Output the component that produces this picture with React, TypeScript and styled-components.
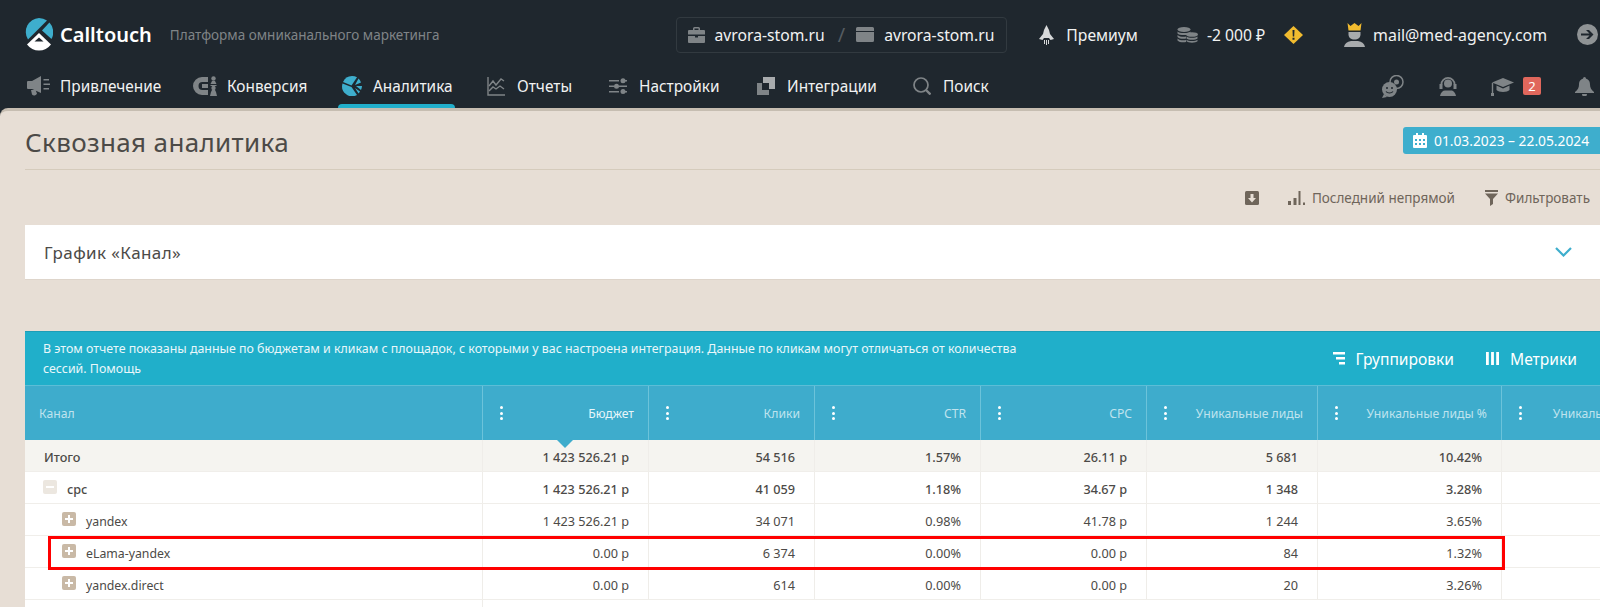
import styled, {createGlobalStyle} from "styled-components";
import {ReactNode} from "react";

const GlobalStyle = createGlobalStyle`
  html, body {
    margin: 0;
    padding: 0;
    height: 607px;
    overflow: hidden;
    background: #e7ded5;
    font-family: "Noto Sans", "Open Sans", sans-serif;
  }
`;

const COLUMNS = "458px 166px 166px 166px 166px 171px 184px 173px";

type RowData = {
    name: string,
    level: 0 | 1 | 2,
    toggle?: "plus" | "minus",
    strong?: boolean,
    total?: boolean,
    values: string[],
}

const HEADERS = ["Бюджет", "Клики", "CTR", "CPC", "Уникальные лиды", "Уникальные лиды %", "Уникальные лиды"];

const ROWS: RowData[] = [
    {name: "Итого", level: 0, strong: true, total: true, values: ["1 423 526.21 р", "54 516", "1.57%", "26.11 р", "5 681", "10.42%", ""]},
    {name: "cpc", level: 1, toggle: "minus", strong: true, values: ["1 423 526.21 р", "41 059", "1.18%", "34.67 р", "1 348", "3.28%", ""]},
    {name: "yandex", level: 2, toggle: "plus", values: ["1 423 526.21 р", "34 071", "0.98%", "41.78 р", "1 244", "3.65%", ""]},
    {name: "eLama-yandex", level: 2, toggle: "plus", values: ["0.00 р", "6 374", "0.00%", "0.00 р", "84", "1.32%", ""]},
    {name: "yandex.direct", level: 2, toggle: "plus", values: ["0.00 р", "614", "0.00%", "0.00 р", "20", "3.26%", ""]},
];

function LogoMark() {
    return (
        <svg width="28" height="33" viewBox="0 0 28 33">
            <path d="M14 0a14 14 0 0 1 8 2.600L3 21.500A14 14 0 0 1 14 0z" fill="#3eaecd"/>
            <path d="M24.400 4.600A14 14 0 0 1 26.500 21L17 12.500z" fill="#3eaecd"/>
            <path d="M14 15l12 11.500a15 15 0 0 1-24 0z" fill="#fff"/>
            <path d="M14 19.500l4.500 4h-9z" fill="#1f272e"/>
        </svg>
    );
}

function Icon({w, h, children}: {w: number, h: number, children: ReactNode}) {
    return <svg width={w} height={h} viewBox={`0 0 ${w} ${h}`} fill="#7f8487">{children}</svg>;
}

function App() {
    return (
        <Page>
            <GlobalStyle/>
            <Header>
                <TopRow>
                    <Brand>
                        <LogoMark/>
                        <BrandName>Calltouch</BrandName>
                    </Brand>
                    <Slogan>Платформа омниканального маркетинга</Slogan>
                    <ProjectBox>
                        <Icon w={17} h={16}>
                            <path d="M5 3V1.500A1.500 1.500 0 0 1 6.500 0h4A1.500 1.500 0 0 1 12 1.500V3h4a1 1 0 0 1 1 1v3.500H0V4a1 1 0 0 1 1-1zM6.500 1.500V3h4V1.500zM0 9h7v1.500h3V9h7v6a1 1 0 0 1-1 1H1a1 1 0 0 1-1-1z"/>
                        </Icon>
                        <TopText>avrora-stom.ru</TopText>
                        <Slash>/</Slash>
                        <Icon w={18} h={15}>
                            <path d="M1.500 0h15A1.500 1.500 0 0 1 18 1.500V4H0V1.500A1.500 1.500 0 0 1 1.500 0zM0 5h18v8.500a1.500 1.500 0 0 1-1.500 1.500h-15A1.500 1.500 0 0 1 0 13.500z"/>
                        </Icon>
                        <TopText>avrora-stom.ru</TopText>
                    </ProjectBox>
                    <TopItem $left={32} $gap={12}>
                        <svg width="15" height="20" viewBox="0 0 15 20" fill="#d7d9da">
                            <path d="M7.500 0l2.500 5 1 4 4 5-3.500 1L10 13H5l-1.500 2L0 14l4-5 1-4z"/>
                            <path d="M5 15h1v4H5zM7 15h1v5H7zM9 15h1v4H9z"/>
                        </svg>
                        <TopText>Премиум</TopText>
                    </TopItem>
                    <TopItem $left={39} $gap={9}>
                        <Icon w={21} h={16}>
                            <ellipse cx="7" cy="2.500" rx="6.500" ry="2.500"/>
                            <path d="M.5 4.500C2 6.500 12 6.500 13.500 4.500V6.500C12 8.500 2 8.500.5 6.500zM.5 8C2 10 8 10 9 9.500V11.500C7 12 2 12 .5 10zM.5 11.500C2 13.500 7 13.500 9 13V15C7 15.500 2 15.500.5 13.500z"/>
                            <ellipse cx="15" cy="7.500" rx="6" ry="2.300"/>
                            <path d="M9.500 9.500c1.500 1.700 9.500 1.700 11 0v2c-1.500 1.700-9.500 1.700-11 0zM9.500 12.800c1.500 1.700 9.500 1.700 11 0v1.500c-1.500 1.900-9.500 1.900-11 0z"/>
                        </Icon>
                        <TopText>-2 000 ₽</TopText>
                    </TopItem>
                    <Warning>
                        <svg width="19" height="18" viewBox="0 0 19 18">
                            <path d="M9.500 0L19 9l-9.500 9L0 9z" fill="#f1bb2f"/>
                            <path d="M8.500 4h2l-.3 6.500H8.800zM8.500 11.800h2v2h-2z" fill="#1f272e"/>
                        </svg>
                    </Warning>
                    <TopItem $left={41} $gap={8}>
                        <svg width="21" height="24" viewBox="0 0 21 24">
                            <path d="M3.500 0l3 3L10.500 0l4 3 3-3-1 7.500h-12z" fill="#f1bb2f"/>
                            <path d="M4.500 9h12v2.500c0 3-2.500 5-6 5s-6-2-6-5z" fill="#a8abad"/>
                            <path d="M0 24c.5-3.500 3-5.500 7-6h7c4 .5 6.500 2.500 7 6z" fill="#a8abad"/>
                        </svg>
                        <MailText>mail@med-agency.com</MailText>
                    </TopItem>
                    <Logout>
                        <svg width="21" height="21" viewBox="0 0 21 21">
                            <circle cx="10.500" cy="10.500" r="10.500" fill="#8f9395"/>
                            <path d="M4 9.500h8.500L9 6h3l4.500 4.500L12 15H9l3.500-3.500H4z" fill="#1f272e"/>
                        </svg>
                    </Logout>
                </TopRow>
                <NavRow>
                    <NavItem $width={166} $gap={10}>
                        <Icon w={23} h={21}>
                            <path d="M0 6a1 1 0 0 1 1-1h4l9-5v17L5 13H1a1 1 0 0 1-1-1zM4 14h4.500l1.500 3.500a3 3 0 0 1-5 1z"/>
                            <path d="M16.500 3H22v1.500h-5.500zM16.500 7.500H23V9h-6.500zM16.500 12H22v1.500h-5.500z"/>
                        </Icon>
                        <NavText>Привлечение</NavText>
                    </NavItem>
                    <NavItem $width={149} $gap={10}>
                        <Icon w={24} h={20}>
                            <path d="M9 1h6v5H9.500a4 4 0 0 0 0 8H15v5H9A9 9 0 0 1 9 1z"/>
                            <path d="M9 8h6v4H9z"/>
                            <circle cx="20.500" cy="2.500" r="2.200"/>
                            <path d="M17.500 8l1.500-3h3l1.500 3zM17.500 9h6v1h-6z"/>
                            <circle cx="20.500" cy="12" r="2.200"/>
                            <path d="M18 16l1-2h3l1 2 1 4h-7z"/>
                        </Icon>
                        <NavText>Конверсия</NavText>
                    </NavItem>
                    <NavItem $width={145} $gap={11} $active>
                        <svg width="20" height="20" viewBox="0 0 20 20" fill="#3eaecd">
                            <path d="M10 0a10 10 0 0 1 5 1.300L9.500 9.500 1 6A10 10 0 0 1 10 0z"/>
                            <path d="M.5 7.500l9 3.500L15 19a10 10 0 0 1-14.500-11.500z"/>
                            <path d="M16.500 2.500A10 10 0 0 1 19 6.500l-6 2.500zM14 10h6a10 10 0 0 1-1 4zM13 12l5 3.500a10 10 0 0 1-1.500 2z"/>
                        </svg>
                        <NavText>Аналитика</NavText>
                    </NavItem>
                    <NavItem $width={122} $gap={12}>
                        <svg width="18" height="19" viewBox="0 0 18 19" fill="none" stroke="#7f8487" strokeWidth="1.400">
                            <path d="M1 0v18h17"/>
                            <path d="M2 9l4-5 3 4 5-6 3 2M2 14l4-4 3 2 4-3 4 3"/>
                        </svg>
                        <NavText>Отчеты</NavText>
                    </NavItem>
                    <NavItem $width={148} $gap={12}>
                        <Icon w={18} h={16}>
                            <path d="M0 2h10v1.500H0zM0 7.500h5V9H0zM10 7.500h8V9h-8zM0 13h10v1.500H0z"/>
                            <circle cx="14" cy="2.700" r="2.500"/>
                            <circle cx="7.500" cy="8.200" r="2.500"/>
                            <circle cx="14" cy="13.500" r="2.500"/>
                            <path d="M14 2h4v1.500h-4zM14 13h4v1.500h-4z"/>
                        </Icon>
                        <NavText>Настройки</NavText>
                    </NavItem>
                    <NavItem $width={156} $gap={12}>
                        <Icon w={18} h={18}>
                            <path d="M6 0h12v12h-6V6H6z" fill="#a8abad"/>
                            <path d="M0 6h5v7h7v5H0z"/>
                            <path d="M6.500 7H11v4.500H6.500z" fill="#1f272e"/>
                        </Icon>
                        <NavText>Интеграции</NavText>
                    </NavItem>
                    <NavItem $width={80} $gap={12}>
                        <svg width="18" height="18" viewBox="0 0 18 18" fill="none" stroke="#7f8487" strokeWidth="1.700">
                            <circle cx="8" cy="8" r="7"/>
                            <path d="M13 13l4.500 4.500" strokeWidth="2.400"/>
                        </svg>
                        <NavText>Поиск</NavText>
                    </NavItem>
                    <NavRight>
                        <Icon w={22} h={23}>
                            <circle cx="14.500" cy="7" r="6.500" fill="none" stroke="#7f8487" strokeWidth="1.500"/>
                            <circle cx="14.500" cy="7" r="2.500"/>
                            <circle cx="7.500" cy="14.500" r="7.500"/>
                            <path d="M0 23l2-4 3 3z"/>
                            <circle cx="5" cy="13" r="1" fill="#1f272e"/>
                            <circle cx="10" cy="13" r="1" fill="#1f272e"/>
                            <path d="M4 16.500c1.500 2 5.500 2 7 0" fill="none" stroke="#1f272e" strokeWidth="1.200"/>
                        </Icon>
                        <RightGap $width={35}/>
                        <Icon w={18} h={19}>
                            <circle cx="9" cy="6.500" r="4"/>
                            <path d="M1.500 7.500a7.500 7.500 0 0 1 15 0h-1.800a5.700 5.700 0 0 0-11.400 0z"/>
                            <path d="M.5 7h3v5h-3zM14.500 7h3v5h-3zM1 19c.5-3.500 3-5.500 5-5.500h6c2 0 4.500 2 5 5.500z"/>
                        </Icon>
                        <RightGap $width={34}/>
                        <Icon w={23} h={19}>
                            <path d="M12 1l11 4.500L12 10 1 5.500z"/>
                            <path d="M5.500 8.500l6.500 3 6.500-3V13c-2 2.500-11 2.500-13 0z"/>
                            <path d="M.8 6h1.400v10H.8zM0 16h3v3H0z"/>
                        </Icon>
                        <Badge>2</Badge>
                        <RightGap $width={34}/>
                        <Icon w={19} h={19}>
                            <circle cx="9.500" cy="1.500" r="1.500"/>
                            <path d="M9.500 1.500c3.500 0 5.500 2.500 5.500 6 0 3 1 5 4 7.500v1H0v-1c3-2.500 4-4.500 4-7.500 0-3.500 2-6 5.500-6zM7 17h5a2.500 2.500 0 0 1-5 0z"/>
                        </Icon>
                    </NavRight>
                </NavRow>
            </Header>
            <Content>
                <TitleRow>
                    <Title>Сквозная аналитика</Title>
                    <DateButton>
                        <svg width="14" height="15" viewBox="0 0 14 15" fill="#fff">
                            <path d="M3 0h2v2h4V0h2v2h2a1 1 0 0 1 1 1v11a1 1 0 0 1-1 1H1a1 1 0 0 1-1-1V3a1 1 0 0 1 1-1h2zM2 6v2h2V6zm4 0v2h2V6zm4 0v2h2V6zM2 10v2h2v-2zm4 0v2h2v-2zm4 0v2h2v-2z"/>
                        </svg>
                        01.03.2023 – 22.05.2024
                    </DateButton>
                </TitleRow>
                <Toolbar>
                    <svg width="14" height="14" viewBox="0 0 14 14">
                        <rect width="14" height="14" rx="1.500" fill="#6f655a"/>
                        <path d="M5.500 3h3v4H11l-4 4.500L3 7h2.500z" fill="#e7ded5"/>
                    </svg>
                    <ToolbarItem $left={29}>
                        <svg width="17" height="14" viewBox="0 0 17 14" fill="#6f655a">
                            <path d="M0 10h3v4H0zM5.500 7h3v7h-3zM10.500 0h2v14h-2zM15 11.500h2V14h-2z"/>
                        </svg>
                        Последний непрямой
                    </ToolbarItem>
                    <ToolbarItem $left={30}>
                        <svg width="13" height="16" viewBox="0 0 13 16" fill="#6f655a">
                            <path d="M0 0h13v2H0zM0 3.500h13L8 9v5l-3 2V9z"/>
                        </svg>
                        Фильтровать
                    </ToolbarItem>
                </Toolbar>
                <ChartCard>
                    <ChartTitle>График «Канал»</ChartTitle>
                    <svg width="17" height="10" viewBox="0 0 17 10" fill="none" stroke="#3eaecd" strokeWidth="2.200">
                        <path d="M1 1l7.500 7.500L16 1"/>
                    </svg>
                </ChartCard>
                <Report>
                    <Banner>
                        <BannerText>
                            В этом отчете показаны данные по бюджетам и кликам с площадок, с которыми у вас настроена интеграция. Данные по кликам могут отличаться от количества сессий. Помощь
                        </BannerText>
                        <BannerAction>
                            <svg width="12" height="13" viewBox="0 0 12 13" fill="#fff">
                                <path d="M0 0h12v2.400H0zM3 5h9v2.400H3zM6 10h6v2.400H6z"/>
                            </svg>
                            Группировки
                        </BannerAction>
                        <BannerAction $left={32}>
                            <svg width="13" height="13" viewBox="0 0 13 13" fill="#fff">
                                <path d="M0 0h2.800v13H0zM5.100 0h2.800v13H5.100zM10.200 0H13v13h-2.800z"/>
                            </svg>
                            Метрики
                        </BannerAction>
                    </Banner>
                    <HeadRow>
                        <HeadCell $first>Канал</HeadCell>
                        {HEADERS.map((header, i) =>
                            <HeadCell key={`head_${i}`} $sorted={i === 0}>
                                <Kebab><i/><i/><i/></Kebab>
                                {header}
                                {i !== 0 || <SortMark/>}
                            </HeadCell>,
                        )}
                    </HeadRow>
                    {ROWS.map((row, i) =>
                        <Row key={`row_${i}`} $total={row.total} $strong={row.strong}>
                            <NameCell $level={row.level}>
                                {row.toggle && <Toggle $kind={row.toggle}/>}
                                {row.name}
                            </NameCell>
                            {row.values.map((value, j) =>
                                <Cell key={`cell_${i}_${j}`}>{value}</Cell>,
                            )}
                        </Row>,
                    )}
                    <Row>
                        <NameCell $level={0}/>
                    </Row>
                    <Highlight/>
                </Report>
            </Content>
        </Page>
    );
}

/* CSS */

const Page = styled.div`
  width: 1600px;
  height: 607px;
  overflow: hidden;
  display: flex;
  flex-direction: column;
  background: #1f272e;
`;

const Header = styled.header`
  flex-shrink: 0;
  height: 108px;
  display: flex;
  flex-direction: column;
  background: #1f272e;
  color: #fff;
`;

const TopRow = styled.div`
  height: 69px;
  flex-shrink: 0;
  display: flex;
  align-items: center;
  padding: 0 2px 0 25px;
`;

const Brand = styled.div`
  display: flex;
  align-items: center;
  gap: 7px;
`;

const BrandName = styled.span`
  font-size: 20px;
  font-weight: 600;
`;

const Slogan = styled.span`
  margin-left: 18px;
  font-size: 13.5px;
  color: #7f8487;
  white-space: nowrap;
`;

const ProjectBox = styled.div`
  margin-left: auto;
  height: 36px;
  box-sizing: border-box;
  display: flex;
  align-items: center;
  gap: 10px;
  padding: 0 12px 0 11px;
  border: 1px solid #323a40;
  border-radius: 4px;
`;

const TopText = styled.span`
  font-size: 15.7px;
  color: #f1f2f2;
  white-space: nowrap;
`;

const MailText = styled(TopText)`
  font-size: 15.9px;
`;

const Slash = styled.span`
  font-size: 20px;
  color: #555c61;
  margin: 0 1px 0 3px;
`;

const TopItem = styled.div<{$left: number, $gap: number}>`
  display: flex;
  align-items: center;
  gap: ${p => p.$gap}px;
  margin-left: ${p => p.$left}px;
`;

const Warning = styled.div`
  display: flex;
  margin-left: 19px;
`;

const Logout = styled.div`
  display: flex;
  margin-left: 30px;
`;

const NavRow = styled.nav`
  flex: 1;
  display: flex;
  align-items: stretch;
  padding: 0 6px 0 27px;
`;

const NavItem = styled.div<{$width: number, $gap: number, $active?: boolean}>`
  position: relative;
  width: ${p => p.$width}px;
  flex-shrink: 0;
  display: flex;
  align-items: center;
  gap: ${p => p.$gap}px;
  padding-bottom: 5px;
  box-sizing: border-box;

  ${p => p.$active && `
    &::after {
      content: "";
      position: absolute;
      left: -4px;
      bottom: 0;
      width: 117px;
      height: 4px;
      border-radius: 4px 4px 0 0;
      background: #22afcb;
    }
  `}
`;

const NavText = styled.span`
  font-size: 15.4px;
  color: #f1f2f2;
  white-space: nowrap;
`;

const NavRight = styled.div`
  margin-left: auto;
  display: flex;
  align-items: center;
  padding-bottom: 5px;
`;

const RightGap = styled.span<{$width: number}>`
  width: ${p => p.$width}px;
`;

const Badge = styled.span`
  width: 18px;
  height: 18px;
  margin-left: 9px;
  border-radius: 2px;
  background: #e0675c;
  color: #fff;
  font-size: 13px;
  line-height: 18px;
  text-align: center;
`;

const Content = styled.main`
  flex: 1;
  min-height: 0;
  padding-left: 25px;
  background: #e7ded5;
  border-top: 3px solid #c6bdb1;
  border-radius: 8px 0 0 0;
`;

const TitleRow = styled.div`
  height: 59px;
  box-sizing: border-box;
  display: flex;
  align-items: center;
  justify-content: space-between;
  border-bottom: 1px solid #d5cbbc;
`;

const Title = styled.h1`
  margin: 3px 0 0;
  font-size: 26px;
  font-weight: 400;
  letter-spacing: .35px;
  color: #4c4a47;
`;

const DateButton = styled.div`
  width: 197px;
  height: 27px;
  box-sizing: border-box;
  display: flex;
  align-items: center;
  gap: 7px;
  padding-left: 10px;
  border-radius: 3px 0 0 3px;
  background: #3eaecd;
  color: #fff;
  font-size: 13.8px;
  white-space: nowrap;
`;

const Toolbar = styled.div`
  height: 55px;
  display: flex;
  align-items: center;
  justify-content: flex-end;
  padding-right: 10px;
`;

const ToolbarItem = styled.div<{$left: number}>`
  display: flex;
  align-items: center;
  gap: 7px;
  margin-left: ${p => p.$left}px;
  font-size: 13.5px;
  color: #6f655a;
  white-space: nowrap;
`;

const ChartCard = styled.section`
  height: 55px;
  display: flex;
  align-items: center;
  justify-content: space-between;
  padding: 0 28px 0 19px;
  background: #fff;
  border-bottom: 1px solid #ded5cb;
  box-sizing: border-box;
`;

const ChartTitle = styled.span`
  font-size: 17px;
  letter-spacing: .4px;
  color: #4c4a47;
`;

const Report = styled.section`
  position: relative;
  margin-top: 51px;
  border-top: 1px solid #1d9db6;
`;

const Banner = styled.div`
  height: 53px;
  box-sizing: border-box;
  display: flex;
  align-items: center;
  padding: 0 23px 0 18px;
  background: #20afca;
  color: #fff;
`;

const BannerText = styled.p`
  width: 985px;
  margin: 0 auto 0 0;
  font-size: 12.4px;
  line-height: 20px;
  color: #e9f7fa;
`;

const BannerAction = styled.div<{$left?: number}>`
  display: flex;
  align-items: center;
  gap: 11px;
  margin-left: ${p => p.$left ?? 0}px;
  font-size: 15.6px;
  white-space: nowrap;
`;

const HeadRow = styled.div`
  height: 55px;
  box-sizing: border-box;
  display: grid;
  grid-template-columns: ${COLUMNS};
  background: #3eaccc;
  border-top: 1px solid #5cbdd6;
`;

const HeadCell = styled.div<{$first?: boolean, $sorted?: boolean}>`
  position: relative;
  display: flex;
  align-items: center;
  justify-content: ${p => p.$first ? "flex-start" : "flex-end"};
  padding: ${p => p.$first ? "0 0 0 14px" : "0 14px 0 0"};
  border-right: 1px solid #6cc3da;
  box-sizing: border-box;
  font-size: 12.2px;
  white-space: nowrap;
  color: ${p => p.$sorted ? "#e8f6fa" : "#bfe3ee"};
`;

const Kebab = styled.span`
  position: absolute;
  left: 17px;
  top: 50%;
  margin-top: -7px;
  display: flex;
  flex-direction: column;
  gap: 2.5px;

  i {
    width: 3px;
    height: 3px;
    border-radius: 50%;
    background: #fff;
  }
`;

const SortMark = styled.span`
  position: absolute;
  z-index: 1;
  right: 75px;
  top: 100%;
  width: 0;
  height: 0;
  border-left: 8px solid transparent;
  border-right: 8px solid transparent;
  border-top: 8px solid #3eaccc;
`;

const Row = styled.div<{$total?: boolean, $strong?: boolean}>`
  height: 32px;
  box-sizing: border-box;
  padding-top: 3px;
  display: grid;
  grid-template-columns: ${COLUMNS};
  background: ${p => p.$total ? "#f5f4f0" : "#fff"};
  border-bottom: 1px solid #f0eeea;
  font-size: 12.7px;
  font-weight: ${p => p.$strong ? 500 : 400};
  color: #4c4a47;
`;

const NameCell = styled.div<{$level: number}>`
  display: flex;
  align-items: center;
  gap: 10px;
  margin-top: -3px;
  padding: 3px 0 0 ${p => p.$level === 2 ? 37 : p.$level === 1 ? 18 : 19}px;
  font-size: ${p => p.$level === 2 ? 12.3 : 12.7}px;
  border-right: 1px solid #efedE9;
  box-sizing: border-box;
`;

const Toggle = styled.span<{$kind: "plus" | "minus"}>`
  position: relative;
  width: 14px;
  height: 14px;
  margin-top: -5px;
  border-radius: 2px;
  background: ${p => p.$kind === "minus" ? "#ece7e0" : "#c9b9a6"};

  &::before {
    content: "";
    position: absolute;
    left: 3px;
    right: 3px;
    top: 6px;
    height: 2px;
    background: #fff;
  }

  ${p => p.$kind === "plus" && `
    &::after {
      content: "";
      position: absolute;
      top: 3px;
      bottom: 3px;
      left: 6px;
      width: 2px;
      background: #fff;
    }
  `}
`;

const Cell = styled.div`
  display: flex;
  align-items: center;
  justify-content: flex-end;
  margin-top: -3px;
  padding: 3px 19px 0 0;
  border-right: 1px solid #efedE9;
  box-sizing: border-box;
  white-space: nowrap;
`;

const Highlight = styled.div`
  position: absolute;
  left: 23px;
  top: 204px;
  width: 1457px;
  height: 34px;
  box-sizing: border-box;
  border: 3px solid #ff0000;
`;

/* CSS */

export default App;
